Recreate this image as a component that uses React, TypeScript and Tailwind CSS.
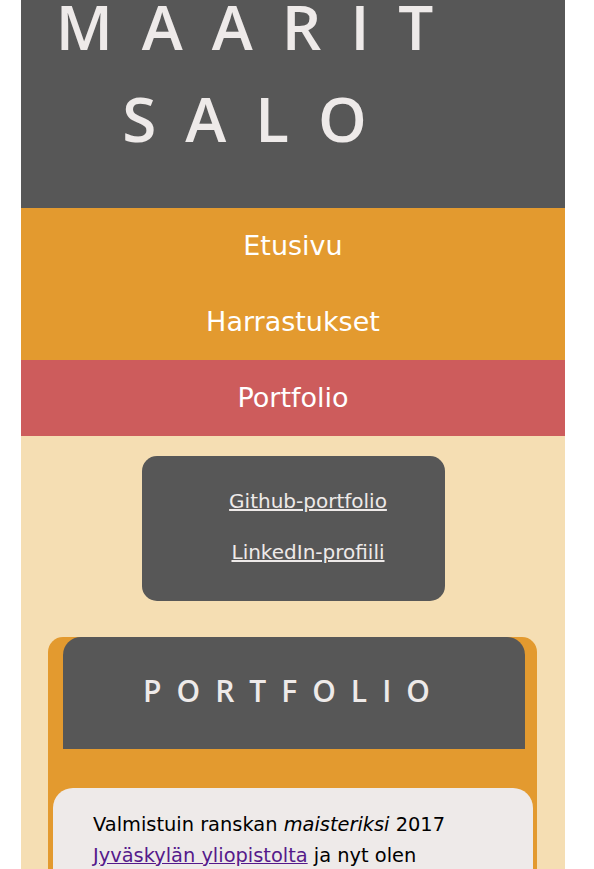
import type { ReactNode } from "react";

const FONT = { fontFamily: '"DejaVu Sans", Verdana, sans-serif' };
const TITLE_FONT = { fontFamily: '"Open Sans", "DejaVu Sans", sans-serif' };

function NavItem({ children, active = false }: { children: ReactNode; active?: boolean }) {
    return (
        <a
            href="#"
            className={
                active
                    ? "block h-[76px] bg-[#cd5c5c] text-center text-[27px] leading-[76px] text-white"
                    : "block h-[76px] text-center text-[27px] leading-[76px] text-white"
            }
        >
            {children}
        </a>
    );
}

export default function App() {
    return (
        <div className="min-h-screen bg-white" style={FONT}>
            <div className="ml-[21px] w-[544px] min-h-[869px] bg-[#f5deb3]">
                {/* Header */}
                <header className="h-[208px] overflow-hidden bg-[#575757] pr-[68px]">
                    <h1
                        className="mt-[-20px] text-center text-[62px] font-semibold leading-[92px] tracking-[29px] text-[#eeeae9]"
                        style={TITLE_FONT}
                    >
                        MAARIT SALO
                    </h1>
                </header>

                {/* Navigation */}
                <nav className="bg-[#e39a2f]">
                    <NavItem>Etusivu</NavItem>
                    <NavItem>Harrastukset</NavItem>
                    <NavItem active>Portfolio</NavItem>
                </nav>

                {/* Links */}
                <div className="mx-auto mt-[20px] w-[303px] rounded-[15px] bg-[#575757] pb-[23px] pl-[30px] pt-[20px]">
                    <ul className="text-center text-[20px] leading-[51px]">
                        <li>
                            <a href="#" className="text-[#eeeae9] underline">Github-portfolio</a>
                        </li>
                        <li>
                            <a href="#" className="text-[#eeeae9] underline">LinkedIn-profiili</a>
                        </li>
                    </ul>
                </div>

                {/* Portfolio card */}
                <section className="ml-[27px] mr-[28px] mt-[36px] rounded-t-[15px] bg-[#e39a2f] pb-[20px]">
                    <div className="ml-[15px] mr-[12px] rounded-t-[18px] bg-[#575757] pb-[40px] pt-[36px]">
                        <h2
                            className="text-center text-[30px] font-semibold leading-[36px] tracking-[15px] text-[#eeeae9]"
                            style={TITLE_FONT}
                        >
                            PORTFOLIO
                        </h2>
                    </div>
                    <div className="ml-[5px] mr-[4px] mt-[39px] rounded-[20px] bg-[#eeeae9] px-[40px] pb-[24px] pt-[21px]">
                        <p className="text-[19.4px] leading-[31px] text-black">
                            Valmistuin ranskan <em>maisteriksi</em> 2017{" "}
                            <a href="#" className="text-[#551a8b] underline">Jyväskylän yliopistolta</a> ja nyt olen
                            opiskellut ohjelmointia ja verkkosivujen tekemistä.
                        </p>
                    </div>
                </section>
            </div>
        </div>
    );
}
